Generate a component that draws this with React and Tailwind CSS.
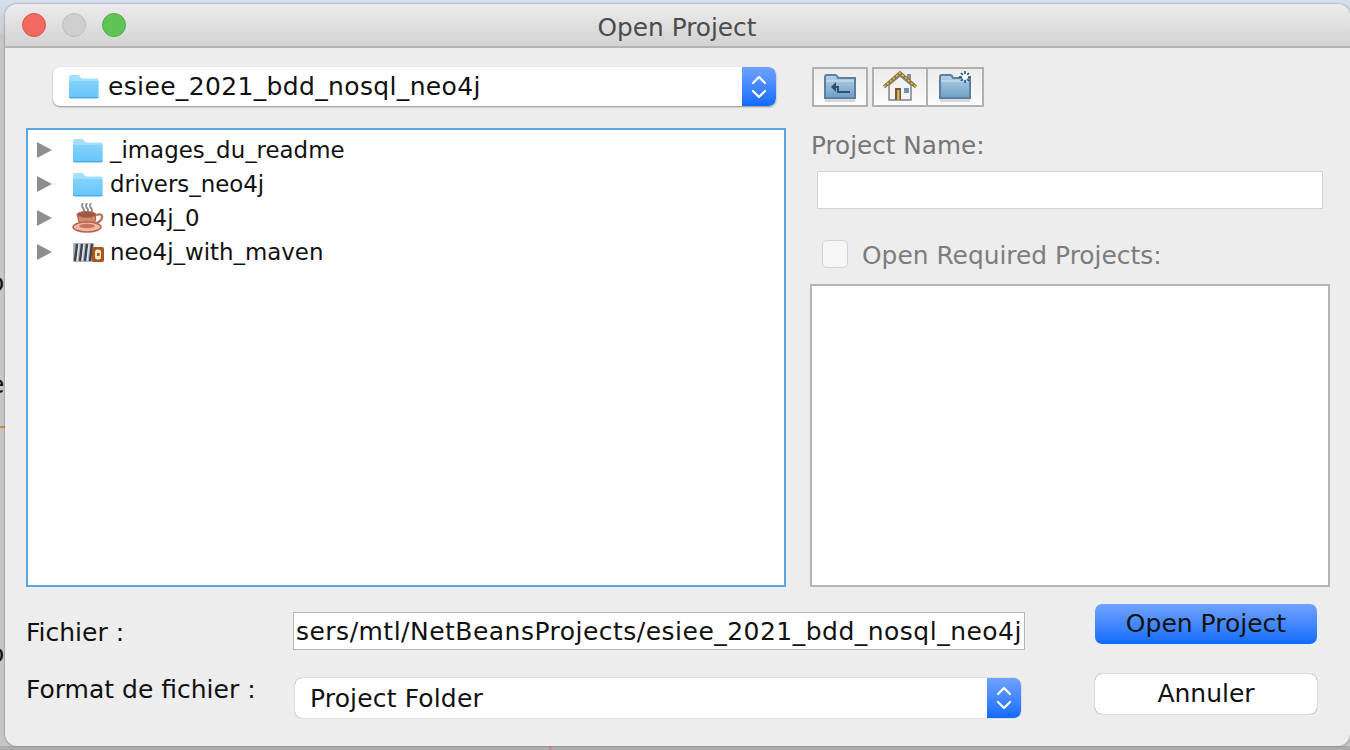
import React from 'react';

const Stepper = ({ h }) => (
  <span className={`flex ${h} w-[34px] shrink-0 items-center justify-center rounded-r-[7px] bg-gradient-to-b from-[#6ea2ff] to-[#0a6bff]`}>
    <svg width="16" height="26" viewBox="0 0 16 26" fill="none" stroke="#fff" strokeWidth="2.2" strokeLinecap="round" strokeLinejoin="round">
      <path d="M2 9 L8 3 L14 9" />
      <path d="M2 17 L8 23 L14 17" />
    </svg>
  </span>
);

const Folder = () => (
  <svg width="31" height="25" viewBox="0 0 31 25" className="shrink-0">
    <defs>
      <linearGradient id="fold" x1="0" y1="0" x2="0" y2="1">
        <stop offset="0" stopColor="#82d3fc" />
        <stop offset="1" stopColor="#66c4fb" />
      </linearGradient>
    </defs>
    <path d="M1 3 Q1 1 3 1 L10 1 Q11.500 1 12.500 3 L13.500 4.500 L29 4.500 Q30.500 4.500 30.500 6 L30.500 22.500 Q30.500 24.500 28.500 24.500 L3 24.500 Q1 24.500 1 22.500 Z" fill="#a3dffc" />
    <path d="M1 7 L30.500 7 L30.500 22.500 Q30.500 24.500 28.500 24.500 L3 24.500 Q1 24.500 1 22.500 Z" fill="url(#fold)" />
    <path d="M1 23.500 L30.500 23.500" stroke="#4fa9e4" strokeWidth="1" />
  </svg>
);

const JavaCup = () => (
  <svg width="32" height="30" viewBox="0 0 32 30" className="shrink-0">
    <path d="M11 0 Q9 3 11 5 T11 10 M15 0 Q13 3 15 5 T15 10 M19 0 Q17 3 19 5 T19 10" fill="none" stroke="#8c8c8c" strokeWidth="1.800" />
    <path d="M5 11 H24 L23 19 Q15 25 7 19 Z" fill="#d58a70" stroke="#a9583f" strokeWidth="1" />
    <ellipse cx="14.500" cy="11.500" rx="9.500" ry="3" fill="#9b5a45" stroke="#b56a50" strokeWidth="1" />
    <path d="M24 12 Q31 10 30 15 Q28 20 21 21" fill="none" stroke="#bf6f55" strokeWidth="2.200" />
    <ellipse cx="15" cy="24" rx="14" ry="5" fill="#efb8a4" stroke="#b5654c" strokeWidth="1.500" />
    <ellipse cx="15" cy="23" rx="8" ry="2.200" fill="#c9745a" />
  </svg>
);

const Maven = () => (
  <svg width="32" height="22" viewBox="0 0 32 22" className="shrink-0">
    <rect x="1" y="2" width="21" height="19" fill="#aeb5bf" />
    <path d="M3 20 L5 3 M8 20 L10 3 M13 20 L15 3 M18 20 L20 3" stroke="#3e434b" strokeWidth="2.400" />
    <path d="M5 20 L7 3 M10 20 L12 3 M15 20 L17 3" stroke="#e6e9ee" strokeWidth="1.200" />
    <rect x="20" y="6" width="12" height="15" rx="2" fill="#a9561b" />
    <rect x="23" y="8.500" width="6" height="10" rx="2.500" fill="#f6e5c8" />
    <rect x="25" y="12" width="2.500" height="3" fill="#a9561b" />
  </svg>
);

const Arrow = () => (
  <svg width="15" height="16" viewBox="0 0 15 16" className="shrink-0">
    <path d="M0 0 L15 8 L0 16 Z" fill="#8e8e8e" />
  </svg>
);

const TreeRow = ({ icon, label }) => (
  <div className="flex h-[34px] items-center">
    <span className="ml-[9px]"><Arrow /></span>
    <span className="ml-[20px] flex w-[38px] items-center">{icon}</span>
    <span>{label}</span>
  </div>
);

const ToolbarButton = ({ className, children }) => (
  <span className={`flex h-[40px] items-center justify-center border-[2px] border-[#b0b0b0] bg-gradient-to-b from-[#ececec] to-[#fbfbfb] ${className}`}>
    {children}
  </span>
);

const BlueFolder = ({ children }) => (
  <svg width="34" height="32" viewBox="0 0 34 32">
    <defs>
      <linearGradient id="tool" x1="0" y1="0" x2="0" y2="1">
        <stop offset="0" stopColor="#b5d2e8" />
        <stop offset="1" stopColor="#6e9fc4" />
      </linearGradient>
    </defs>
    <path d="M2 6 Q2 4 4 4 H12 Q14 4 15 7 H32 V27 H2 Z" fill="url(#tool)" stroke="#5f7f9c" strokeWidth="2" />
    <path d="M3 10 H31" stroke="#d2e3f0" strokeWidth="1" />
    <path d="M2 29.500 H32" stroke="#d4d8dc" strokeWidth="3" />
    {children}
  </svg>
);

const House = () => (
  <svg width="34" height="32" viewBox="0 0 34 32">
    <rect x="24" y="3" width="4" height="10" fill="#8a8f99" />
    <path d="M6 14 L17 5 L28 14 V29 H6 Z" fill="#f2f2f4" stroke="#7d828c" strokeWidth="1.500" />
    <path d="M1 16 L17 2 L33 16" fill="none" stroke="#8f7a35" strokeWidth="3.500" />
    <path d="M1 16 L17 2 L33 16" fill="none" stroke="#d6c27c" strokeWidth="1.500" strokeDasharray="2 2" />
    <rect x="12" y="17" width="6" height="12" fill="#7a5a20" />
    <rect x="14" y="19" width="2.500" height="10" fill="#c9b27a" />
    <rect x="21" y="17" width="5" height="5" fill="#6d93bd" />
  </svg>
);

export default function App() {
  return (
    <div className="relative h-[750px] w-[1350px] overflow-hidden bg-[#c6c6c6] font-['DejaVu_Sans',sans-serif] text-[25px] leading-none text-[#111]">
      {/* bits of the window behind the dialog */}
      <div className="absolute left-0 top-0 h-[34px] w-full bg-gradient-to-b from-[#d5dfee] to-[#c9ccd2]" />
      <div className="absolute bottom-0 left-0 h-[4px] w-full bg-[#adadad]" />
      <span className="absolute left-[-11px] top-[270px] text-[25px]">o</span>
      <span className="absolute left-[-11px] top-[372px] text-[25px]">e</span>
      <span className="absolute left-[-11px] top-[641px] text-[25px]">o</span>
      <div className="absolute left-0 top-[426px] h-[2px] w-[5px] bg-[#d08a3a]" />
      <div className="absolute bottom-0 left-[549px] h-[4px] w-[3px] bg-[#c98c8c]" />

      <div className="relative ml-[5px] mt-[4px] h-[742px] w-[1345px] overflow-hidden rounded-[12px] bg-[#ededed] shadow-[0_0_2px_rgba(0,0,0,0.5)]">
        <div className="relative flex h-[44px] items-center border-b-[2px] border-[#b3b3b3] bg-gradient-to-b from-[#ececec] to-[#d3d3d3] pl-[17px]">
          <span className="h-[24px] w-[24px] rounded-full border border-[#e0544b] bg-[#f1695f]" />
          <span className="ml-[16px] h-[24px] w-[24px] rounded-full border border-[#bcbcbc] bg-[#cfcfcf]" />
          <span className="ml-[16px] h-[24px] w-[24px] rounded-full border border-[#4fae43] bg-[#5fc454]" />
          <span className="absolute left-0 right-[1px] top-[12px] text-center text-[24.8px] text-[#4c4c4c]">Open Project</span>
        </div>

        <div className="ml-[21px] mt-[19px] flex h-[520px]">
          <div className="flex w-[760px] flex-col">
            <div className="ml-[27px] flex h-[39px] w-[723px] items-center overflow-hidden rounded-[7px] bg-white shadow-[0_1px_2px_rgba(0,0,0,0.4)]">
              <span className="ml-[15px] flex w-[40px] items-center"><Folder /></span>
              <span className="flex-1 tracking-[0.35px]">esiee_2021_bdd_nosql_neo4j</span>
              <Stepper h="h-[39px]" />
            </div>
            <div className="mt-[22px] flex-1 border-[2px] border-[#5aa5e4] bg-white pt-[3px] text-[22.9px]">
              <TreeRow icon={<Folder />} label="_images_du_readme" />
              <TreeRow icon={<Folder />} label="drivers_neo4j" />
              <TreeRow icon={<JavaCup />} label="neo4j_0" />
              <TreeRow icon={<Maven />} label="neo4j_with_maven" />
            </div>
          </div>

          <div className="ml-[24px] flex w-[520px] flex-col">
            <div className="ml-[2px] flex">
              <ToolbarButton className="w-[56px]">
                <BlueFolder>
                  <path d="M8 16 L13 11 L13 21 Z" fill="#2f4f6e" />
                  <path d="M12 16 H15 V21 H27" fill="none" stroke="#2f4f6e" strokeWidth="2" />
                </BlueFolder>
              </ToolbarButton>
              <ToolbarButton className="ml-[4px] w-[56px]"><House /></ToolbarButton>
              <ToolbarButton className="w-[56px] border-l-0">
                <BlueFolder>
                  <path d="M27 0 V12 M21 6 H33 M23 2 L31 10 M31 2 L23 10" stroke="#24486b" strokeWidth="1.500" />
                  <circle cx="27" cy="6" r="3" fill="#fff" />
                </BlueFolder>
              </ToolbarButton>
            </div>
            <div className="ml-[1px] mt-[27px] text-[24.7px] text-[#767676]">Project Name:</div>
            <div className="ml-[7px] mt-[12px] h-[38px] w-[506px] border border-[#d3d3d3] bg-white" />
            <div className="ml-[12px] mt-[30px] flex items-center">
              <span className="h-[28px] w-[26px] rounded-[5px] border border-[#d2d2d2] bg-[#f6f6f6]" />
              <span className="ml-[14px] pt-[5px] text-[24.9px] text-[#7d7d7d]">Open Required Projects:</span>
            </div>
            <div className="mt-[15px] flex-1 border-[2px] border-[#b5b5b5] bg-white" />
          </div>
        </div>

        <div className="mt-[17px] flex">
          <div className="ml-[21px] flex w-[1001px] flex-col pt-[8px]">
            <div className="flex h-[38px]">
              <span className="w-[267px] pt-[8px]">Fichier :</span>
              <div className="flex h-[38px] w-[732px] items-center overflow-hidden border border-[#b8b8b8] bg-white pl-[2px] tracking-[0.48px] whitespace-nowrap">
                sers/mtl/NetBeansProjects/esiee_2021_bdd_nosql_neo4j
              </div>
            </div>
            <div className="mt-[28px] flex h-[40px]">
              <span className="mt-[-1px] w-[269px]">Format de fichier :</span>
              <div className="flex h-[40px] w-[726px] items-center overflow-hidden rounded-[7px] bg-white pl-[15px] shadow-[0_0_1px_rgba(0,0,0,0.6)]">
                <span className="flex-1 tracking-[0.15px]">Project Folder</span>
                <Stepper h="h-[40px]" />
              </div>
            </div>
          </div>
          <div className="ml-[68px] flex w-[222px] flex-col">
            <button className="h-[40px] rounded-[7px] bg-gradient-to-b from-[#6ea2ff] to-[#0a6bff] pb-[2px] text-center">Open Project</button>
            <button className="mt-[30px] h-[40px] rounded-[7px] bg-white pb-[2px] text-center shadow-[0_0_1px_rgba(0,0,0,0.7)]">Annuler</button>
          </div>
        </div>
      </div>
    </div>
  );
}
